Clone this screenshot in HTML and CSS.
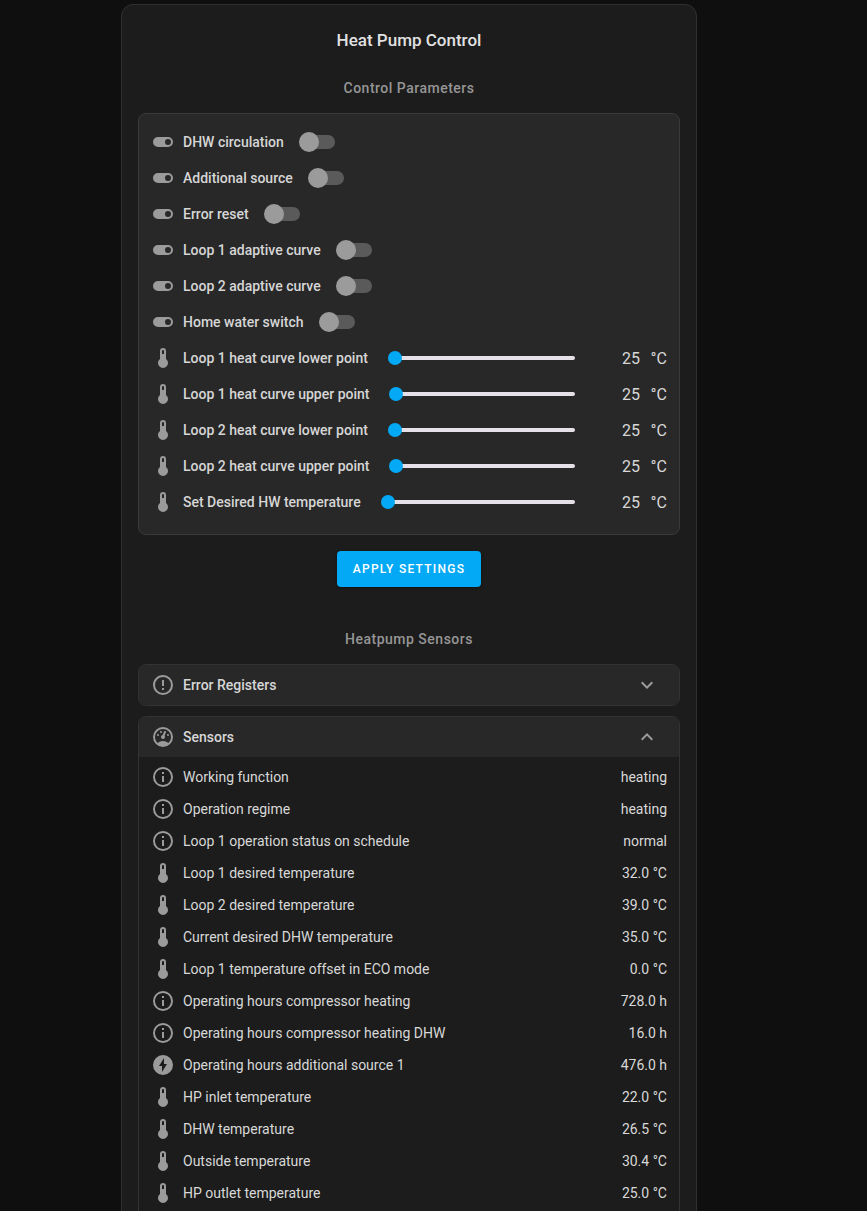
FILE: index.html
```html
<!DOCTYPE html>
<html lang="en">
<head>
  <meta charset="UTF-8">
  <title>Heat Pump Control</title>
  <link rel="stylesheet" href="styles.css">
</head>
<body>
  <svg class="defs" width="0" height="0">
    <symbol id="i-toggle" viewBox="0 0 24 24"><path d="M17,7H7A5,5 0 0,0 2,12A5,5 0 0,0 7,17H17A5,5 0 0,0 22,12A5,5 0 0,0 17,7M17,15A3,3 0 0,1 14,12A3,3 0 0,1 17,9A3,3 0 0,1 20,12A3,3 0 0,1 17,15Z"/></symbol>
    <symbol id="i-therm" viewBox="0 0 24 24"><path d="M15 13V5A3 3 0 0 0 9 5V13A5 5 0 1 0 15 13M12 4A1 1 0 0 1 13 5V8H11V5A1 1 0 0 1 12 4Z"/></symbol>
    <symbol id="i-alert" viewBox="0 0 24 24"><path d="M11,15H13V17H11V15M11,7H13V13H11V7M12,2C6.47,2 2,6.5 2,12A10,10 0 0,0 12,22A10,10 0 0,0 22,12A10,10 0 0,0 12,2M12,20A8,8 0 0,1 4,12A8,8 0 0,1 12,4A8,8 0 0,1 20,12A8,8 0 0,1 12,20Z"/></symbol>
    <symbol id="i-info" viewBox="0 0 24 24"><path d="M11,9H13V7H11M12,20C7.59,20 4,16.41 4,12C4,7.59 7.59,4 12,4C16.41,4 20,7.59 20,12C20,16.41 16.41,20 12,20M12,2A10,10 0 0,0 2,12A10,10 0 0,0 12,22A10,10 0 0,0 22,12A10,10 0 0,0 12,2M11,17H13V11H11V17Z"/></symbol>
    <symbol id="i-gauge" viewBox="0 0 24 24"><path d="M12,2A10,10 0 0,0 2,12A10,10 0 0,0 12,22A10,10 0 0,0 22,12A10,10 0 0,0 12,2M12,4A8,8 0 0,1 20,12C20,14.4 19,16.5 17.3,18C15.9,16.7 14,16 12,16C10,16 8.2,16.7 6.7,18C5,16.5 4,14.4 4,12A8,8 0 0,1 12,4M14,5.89C13.62,5.9 13.26,6.15 13.1,6.54L11.81,9.77L11.71,10C11,10.13 10.41,10.6 10.14,11.26C9.73,12.29 10.23,13.45 11.26,13.86C12.29,14.27 13.45,13.77 13.86,12.74C14.12,12.08 14,11.32 13.57,10.76L13.67,10.5L14.96,7.29L14.97,7.26C15.17,6.75 14.92,6.17 14.41,5.96C14.28,5.91 14.15,5.89 14,5.89M10,6A1,1 0 0,0 9,7A1,1 0 0,0 10,8A1,1 0 0,0 11,7A1,1 0 0,0 10,6M7,9A1,1 0 0,0 6,10A1,1 0 0,0 7,11A1,1 0 0,0 8,10A1,1 0 0,0 7,9M17,9A1,1 0 0,0 16,10A1,1 0 0,0 17,11A1,1 0 0,0 18,10A1,1 0 0,0 17,9Z"/></symbol>
    <symbol id="i-flash" viewBox="0 0 24 24"><path d="M12,2A10,10 0 0,0 2,12A10,10 0 0,0 12,22A10,10 0 0,0 22,12A10,10 0 0,0 12,2M11,19V13H8L13,5V11H16L11,19Z"/></symbol>
    <symbol id="i-down" viewBox="0 0 24 24"><path d="M7.41,8.58L12,13.17L16.59,8.58L18,10L12,16L6,10L7.41,8.58Z"/></symbol>
    <symbol id="i-up" viewBox="0 0 24 24"><path d="M7.41,15.41L12,10.83L16.59,15.41L18,14L12,8L6,14L7.41,15.41Z"/></symbol>
  </svg>

  <main class="card">
    <h1 class="title">Heat Pump Control</h1>

    <h2 class="section-title first">Control Parameters</h2>
    <section class="panel">
      <div class="row"><svg class="icon"><use href="#i-toggle"/></svg><span class="label">DHW circulation</span><span class="switch"><span class="track"></span><span class="knob"></span></span></div>
      <div class="row"><svg class="icon"><use href="#i-toggle"/></svg><span class="label">Additional source</span><span class="switch"><span class="track"></span><span class="knob"></span></span></div>
      <div class="row"><svg class="icon"><use href="#i-toggle"/></svg><span class="label">Error reset</span><span class="switch"><span class="track"></span><span class="knob"></span></span></div>
      <div class="row"><svg class="icon"><use href="#i-toggle"/></svg><span class="label">Loop 1 adaptive curve</span><span class="switch"><span class="track"></span><span class="knob"></span></span></div>
      <div class="row"><svg class="icon"><use href="#i-toggle"/></svg><span class="label">Loop 2 adaptive curve</span><span class="switch"><span class="track"></span><span class="knob"></span></span></div>
      <div class="row"><svg class="icon"><use href="#i-toggle"/></svg><span class="label">Home water switch</span><span class="switch"><span class="track"></span><span class="knob"></span></span></div>
      <div class="row"><svg class="icon"><use href="#i-therm"/></svg><span class="label">Loop 1 heat curve lower point</span><span class="slider"><span class="thumb"></span></span><span class="num">25</span><span class="unit">°C</span></div>
      <div class="row"><svg class="icon"><use href="#i-therm"/></svg><span class="label">Loop 1 heat curve upper point</span><span class="slider"><span class="thumb"></span></span><span class="num">25</span><span class="unit">°C</span></div>
      <div class="row"><svg class="icon"><use href="#i-therm"/></svg><span class="label">Loop 2 heat curve lower point</span><span class="slider"><span class="thumb"></span></span><span class="num">25</span><span class="unit">°C</span></div>
      <div class="row"><svg class="icon"><use href="#i-therm"/></svg><span class="label">Loop 2 heat curve upper point</span><span class="slider"><span class="thumb"></span></span><span class="num">25</span><span class="unit">°C</span></div>
      <div class="row"><svg class="icon"><use href="#i-therm"/></svg><span class="label">Set Desired HW temperature</span><span class="slider"><span class="thumb"></span></span><span class="num">25</span><span class="unit">°C</span></div>
    </section>

    <div class="actions"><button class="apply">Apply Settings</button></div>

    <h2 class="section-title">Heatpump Sensors</h2>

    <section class="accordion">
      <div class="acc-head"><svg class="icon"><use href="#i-alert"/></svg><span class="label">Error Registers</span><svg class="chev"><use href="#i-down"/></svg></div>
    </section>

    <section class="accordion">
      <div class="acc-head"><svg class="icon"><use href="#i-gauge"/></svg><span class="label">Sensors</span><svg class="chev"><use href="#i-up"/></svg></div>
      <div class="acc-body">
        <div class="sensor"><svg class="icon"><use href="#i-info"/></svg><span class="name">Working function</span><span class="val">heating</span></div>
        <div class="sensor"><svg class="icon"><use href="#i-info"/></svg><span class="name">Operation regime</span><span class="val">heating</span></div>
        <div class="sensor"><svg class="icon"><use href="#i-info"/></svg><span class="name">Loop 1 operation status on schedule</span><span class="val">normal</span></div>
        <div class="sensor"><svg class="icon"><use href="#i-therm"/></svg><span class="name">Loop 1 desired temperature</span><span class="val">32.0 °C</span></div>
        <div class="sensor"><svg class="icon"><use href="#i-therm"/></svg><span class="name">Loop 2 desired temperature</span><span class="val">39.0 °C</span></div>
        <div class="sensor"><svg class="icon"><use href="#i-therm"/></svg><span class="name">Current desired DHW temperature</span><span class="val">35.0 °C</span></div>
        <div class="sensor"><svg class="icon"><use href="#i-therm"/></svg><span class="name">Loop 1 temperature offset in ECO mode</span><span class="val">0.0 °C</span></div>
        <div class="sensor"><svg class="icon"><use href="#i-info"/></svg><span class="name">Operating hours compressor heating</span><span class="val">728.0 h</span></div>
        <div class="sensor"><svg class="icon"><use href="#i-info"/></svg><span class="name">Operating hours compressor heating DHW</span><span class="val">16.0 h</span></div>
        <div class="sensor"><svg class="icon"><use href="#i-flash"/></svg><span class="name">Operating hours additional source 1</span><span class="val">476.0 h</span></div>
        <div class="sensor"><svg class="icon"><use href="#i-therm"/></svg><span class="name">HP inlet temperature</span><span class="val">22.0 °C</span></div>
        <div class="sensor"><svg class="icon"><use href="#i-therm"/></svg><span class="name">DHW temperature</span><span class="val">26.5 °C</span></div>
        <div class="sensor"><svg class="icon"><use href="#i-therm"/></svg><span class="name">Outside temperature</span><span class="val">30.4 °C</span></div>
        <div class="sensor"><svg class="icon"><use href="#i-therm"/></svg><span class="name">HP outlet temperature</span><span class="val">25.0 °C</span></div>
      </div>
    </section>
  </main>
</body>
</html>
```

FILE: styles.css
```css
html, body {
  height: 1211px;
  overflow: hidden;
}

body {
  margin: 0;
  background: #0f0f0f;
  color: #e1e1e1;
  font-family: Roboto, sans-serif;
  font-size: 14px;
}

.defs {
  position: absolute;
}

.card {
  box-sizing: border-box;
  width: 576px;
  margin: 4px 0 0 121px;
  padding: 0 16px 16px;
  background: #1c1c1c;
  border: 1px solid #303030;
  border-radius: 12px;
}

.title {
  margin: 0;
  padding-top: 24px;
  height: 22px;
  line-height: 22px;
  font-size: 17px;
  font-weight: 500;
  text-align: center;
  color: #e1e1e1;
}

.section-title {
  margin: 0;
  height: 20px;
  line-height: 20px;
  font-size: 14px;
  font-weight: 500;
  letter-spacing: 0.5px;
  text-align: center;
  color: #969696;
}

.section-title.first {
  margin-top: 27px;
  margin-bottom: 15px;
}

.panel {
  box-sizing: border-box;
  height: 422px;
  padding: 10px 12px 0 12px;
  background: #282828;
  border: 1px solid #3a3a3a;
  border-radius: 8px;
}

.row {
  display: flex;
  align-items: center;
  height: 36px;
}

.icon {
  flex: none;
  width: 24px;
  height: 24px;
  fill: #9b9b9b;
}

.label {
  margin-left: 8px;
  font-weight: 500;
  white-space: nowrap;
  color: #d6d6d6;
}

.switch {
  position: relative;
  flex: none;
  width: 36px;
  height: 20px;
  margin-left: 15px;
}

.track {
  position: absolute;
  top: 3px;
  left: 2px;
  width: 34px;
  height: 14px;
  border-radius: 7px;
  background: #5a5a5a;
}

.knob {
  position: absolute;
  top: 0;
  left: 0;
  width: 20px;
  height: 20px;
  border-radius: 50%;
  background: #9b9b9b;
}

.slider {
  position: relative;
  flex: 1;
  height: 4px;
  margin-left: 26px;
  border-radius: 2px;
  background: #e6e1e9;
}

.thumb {
  position: absolute;
  top: -5px;
  left: -6px;
  width: 14px;
  height: 14px;
  border-radius: 50%;
  background: #03a9f4;
}

.num {
  flex: none;
  width: 65px;
  font-size: 16px;
  text-align: right;
  color: #d8d8d8;
}

.unit {
  flex: none;
  width: 27px;
  font-size: 16px;
  text-align: right;
  color: #d8d8d8;
}

.actions {
  display: flex;
  justify-content: center;
  margin: 16px 0 42px;
}

.apply {
  width: 144px;
  height: 36px;
  padding: 0;
  border: none;
  border-radius: 4px;
  background: #03a9f4;
  color: #fff;
  font-family: Roboto, sans-serif;
  font-size: 12px;
  font-weight: 500;
  letter-spacing: 1.25px;
  text-transform: uppercase;
  box-shadow: 0 1px 3px rgba(0, 0, 0, 0.4);
}

.section-title + .accordion {
  margin-top: 15px;
}

.accordion {
  margin-bottom: 10px;
  border: 1px solid #333;
  border-radius: 8px;
  background: #1c1c1c;
  overflow: hidden;
}

.acc-head {
  display: flex;
  align-items: center;
  height: 40px;
  padding: 0 20px 0 12px;
  background: #282828;
}

.chev {
  width: 24px;
  height: 24px;
  margin-left: auto;
  fill: #9b9b9b;
}

.acc-body {
  padding: 4px 12px 40px;
}

.sensor {
  display: flex;
  align-items: center;
  height: 32px;
}

.name {
  margin-left: 8px;
  color: #d8d8d8;
}

.val {
  margin-left: auto;
  color: #d8d8d8;
}
```
